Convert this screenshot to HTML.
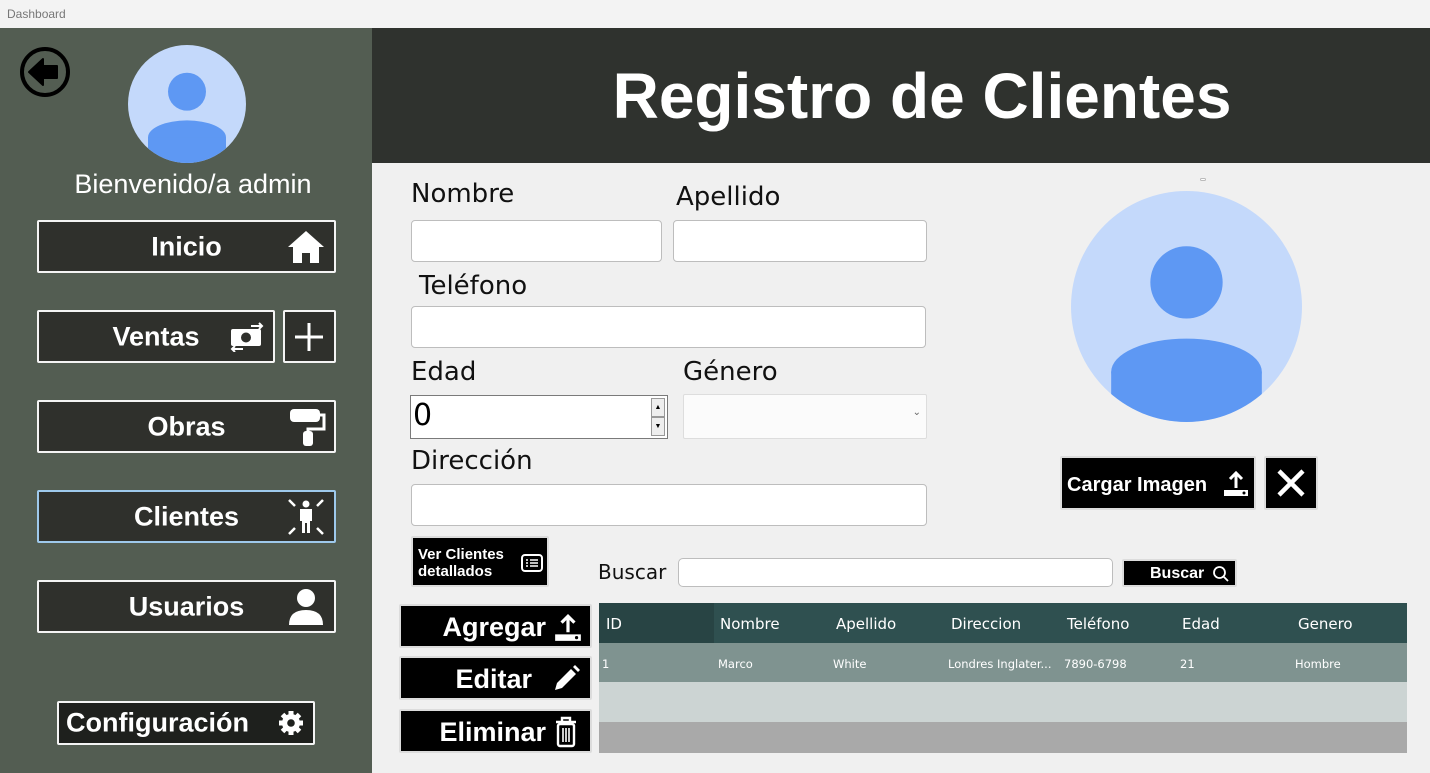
<!DOCTYPE html>
<html><head><meta charset="utf-8"><style>
*{margin:0;padding:0;box-sizing:border-box}
body{width:1430px;height:773px;overflow:hidden;background:#f0f0f0;font-family:"Liberation Sans",sans-serif;position:relative}
.a{position:absolute}
.tb{left:0;top:0;width:1430px;height:28px;background:#f3f3f3;font-size:12px;color:#777;padding:7px 0 0 7px}
.side{left:0;top:28px;width:372px;height:745px;background:#535d52}
.hdr{left:372px;top:28px;width:1058px;height:135px;background:#2f322e;color:#fff;font-weight:bold;font-size:64px;text-align:center;line-height:137px;padding-left:42px}
.nb{background:#2f302c;border:2px solid #f4f4f4;border-radius:2px;color:#fff;font-weight:bold;font-size:27px;text-align:center}
.nb span{position:absolute;left:0;right:0;top:50%;transform:translateY(-50%)}
.nb svg{position:absolute;right:8px;top:50%;transform:translateY(-50%)}
.lbl{font-family:"DejaVu Sans",sans-serif;font-size:26px;color:#111}
.inp{background:#fff;border:1px solid #bdbdbd;border-radius:4px}
.bb{background:#000;border:2px solid #dcdcdc;border-radius:2px;color:#fff;font-weight:bold}
.th{font-family:"DejaVu Sans",sans-serif;font-size:15px;color:#fff;top:615px}
.td{font-family:"DejaVu Sans",sans-serif;font-size:11.5px;color:#fff;top:657px}
</style></head><body>
<div class="a tb">Dashboard</div>
<div class="a side"></div>
<svg class="a" style="left:19px;top:46px" width="52" height="52" viewBox="0 0 52 52"><circle cx="26" cy="26" r="23" fill="none" stroke="#000" stroke-width="4"/><path d="M10 26 L24 13 L24 20 L38 20 L38 32 L24 32 L24 39 Z" fill="#000" stroke="#000" stroke-width="2" stroke-linejoin="round"/></svg>
<svg class="a" style="left:128px;top:45px" width="118" height="118" viewBox="0 0 230 230"><defs><clipPath id="c1"><circle cx="115" cy="115" r="115"/></clipPath></defs><circle cx="115" cy="115" r="115" fill="#c4d9fb"/><circle cx="115" cy="91" r="37" fill="#5e98f3"/><g clip-path="url(#c1)"><ellipse cx="115" cy="180" rx="76" ry="33" fill="#5e98f3"/><rect x="39" y="180" width="152" height="60" fill="#5e98f3"/></g></svg>
<div class="a" style="left:0;width:386px;top:169px;text-align:center;color:#fff;font-size:27px">Bienvenido/a admin</div>

<div class="a nb" style="left:37px;top:220px;width:299px;height:53px"><span>Inicio</span><svg width="40" height="36" viewBox="0 0 40 36"><path d="M20 2 L38 18 L33 18 L33 34 L24 34 L24 24 L16 24 L16 34 L7 34 L7 18 L2 18 Z" fill="#fff"/></svg></div>

<div class="a nb" style="left:37px;top:310px;width:238px;height:53px"><span>Ventas</span><svg width="36" height="30" viewBox="0 0 36 30"><rect x="2" y="7" width="30" height="17" rx="2" fill="#fff"/><circle cx="17" cy="15.5" r="5" fill="#2f302c"/><path d="M22 4 H33 M30 1 L33 4 L30 7 M14 27 H3 M6 24 L3 27 L6 30" stroke="#fff" stroke-width="2" fill="none"/></svg></div>
<div class="a nb" style="left:283px;top:310px;width:53px;height:53px"><svg style="right:8px" width="34" height="34" viewBox="0 0 34 34"><path d="M17 3 V31 M3 17 H31" stroke="#fff" stroke-width="3"/></svg></div>

<div class="a nb" style="left:37px;top:400px;width:299px;height:53px"><span>Obras</span><svg width="38" height="40" viewBox="0 0 38 40"><rect x="2" y="2" width="30" height="13" rx="4" fill="#fff"/><path d="M32 8 H36 V22 H20 V27" stroke="#fff" stroke-width="3" fill="none"/><rect x="15" y="24" width="10" height="15" rx="3" fill="#fff"/></svg></div>

<div class="a nb" style="left:37px;top:490px;width:299px;height:53px;border-color:#9ec9ec"><span>Clientes</span><svg width="40" height="40" viewBox="0 0 40 40"><circle cx="20" cy="7" r="3.5" fill="#fff"/><path d="M14 12 H26 V24 H24 V36 H21 V26 H19 V36 H16 V24 H14 Z" fill="#fff"/><path d="M3 3 L9 9 M37 3 L31 9 M3 37 L9 31 M37 37 L31 31" stroke="#fff" stroke-width="2.5"/></svg></div>

<div class="a nb" style="left:37px;top:580px;width:299px;height:53px"><span>Usuarios</span><svg width="40" height="40" viewBox="0 0 40 40"><circle cx="20" cy="11" r="9" fill="#fff"/><path d="M3 38 Q3 23 20 23 Q37 23 37 38 Z" fill="#fff"/></svg></div>

<div class="a nb" style="left:57px;top:701px;width:258px;height:44px;background:#1e201d;font-size:27px"><span style="left:7px;right:0;text-align:left">Configuración</span><svg style="right:8px" width="28" height="28" viewBox="0 0 28 28"><g fill="#fff"><circle cx="14" cy="14" r="9"/><g stroke="#fff" stroke-width="5"><path d="M14 2 V26 M2 14 H26 M5.5 5.5 L22.5 22.5 M22.5 5.5 L5.5 22.5"/></g></g><circle cx="14" cy="14" r="3.8" fill="#1e201d"/></svg></div>

<div class="a hdr">Registro de Clientes</div>

<div class="a lbl" style="left:411px;top:179px">Nombre</div>
<div class="a lbl" style="left:676px;top:182px">Apellido</div>
<div class="a inp" style="left:411px;top:220px;width:251px;height:42px"></div>
<div class="a inp" style="left:673px;top:220px;width:254px;height:42px"></div>
<div class="a lbl" style="left:419px;top:271px">Teléfono</div>
<div class="a inp" style="left:411px;top:306px;width:515px;height:42px"></div>
<div class="a lbl" style="left:411px;top:357px">Edad</div>
<div class="a lbl" style="left:683px;top:357px">Género</div>
<div class="a" style="left:410px;top:395px;width:258px;height:44px;background:#fff;border:1px solid #7a7a7a"><div class="a" style="left:2px;top:2px;font-family:'DejaVu Sans',sans-serif;font-size:30px;color:#000">0</div><div class="a" style="right:2px;top:2px;width:14px;height:19px;background:#eee;border:1px solid #999;font-size:7px;text-align:center;line-height:17px">▲</div><div class="a" style="right:2px;top:21px;width:14px;height:19px;background:#eee;border:1px solid #999;font-size:7px;text-align:center;line-height:17px">▼</div></div>
<div class="a" style="left:683px;top:394px;width:244px;height:45px;background:#fbfbfb;border:1px solid #ddd;border-radius:2px"><div class="a" style="right:5px;top:12px;font-size:10px;color:#666">⌄</div></div>
<div class="a lbl" style="left:411px;top:446px">Dirección</div>
<div class="a inp" style="left:411px;top:484px;width:516px;height:42px"></div>

<div class="a" style="left:1200px;top:178px;width:6px;height:3px;border:1px solid #bbb;border-radius:2px;background:#fff"></div>
<svg class="a" style="left:1071px;top:191px" width="231" height="231" viewBox="0 0 230 230"><defs><clipPath id="c2"><circle cx="115" cy="115" r="115"/></clipPath></defs><circle cx="115" cy="115" r="115" fill="#c4d9fb"/><circle cx="115" cy="91" r="36" fill="#5e98f3"/><g clip-path="url(#c2)"><ellipse cx="115" cy="180" rx="75" ry="33" fill="#5e98f3"/><rect x="40" y="180" width="150" height="60" fill="#5e98f3"/></g></svg>

<div class="a bb" style="left:1060px;top:456px;width:196px;height:54px;font-size:20px"><div class="a" style="left:5px;top:16px">Cargar Imagen</div><svg class="a" style="left:160px;top:12px" width="28" height="28" viewBox="0 0 28 28"><path d="M14 18 V3 M8 9 L14 3 L20 9" stroke="#fff" stroke-width="3" fill="none"/><path d="M2 20 H26 V26 H2 Z" fill="#fff"/><circle cx="22" cy="23" r="1.5" fill="#000"/></svg></div>
<div class="a bb" style="left:1264px;top:456px;width:54px;height:54px"><svg class="a" style="left:9px;top:9px" width="32" height="32" viewBox="0 0 32 32"><path d="M4 4 L28 28 M28 4 L4 28" stroke="#fff" stroke-width="4.5"/></svg></div>

<div class="a bb" style="left:411px;top:536px;width:138px;height:51px;font-size:15px;line-height:17px"><div class="a" style="left:5px;top:8px">Ver Clientes<br>detallados</div><svg class="a" style="left:108px;top:16px" width="22" height="18" viewBox="0 0 22 18"><rect x="1" y="1" width="20" height="16" rx="3" fill="none" stroke="#fff" stroke-width="2"/><path d="M5 6 H7 M9 6 H17 M5 9 H7 M9 9 H17 M5 12 H7 M9 12 H17" stroke="#fff" stroke-width="1.6"/></svg></div>

<div class="a lbl" style="left:598px;top:560px;font-size:20px">Buscar</div>
<div class="a inp" style="left:678px;top:558px;width:435px;height:29px;border-radius:5px"></div>
<div class="a bb" style="left:1122px;top:559px;width:115px;height:28px;font-size:16px"><div class="a" style="left:26px;top:4px">Buscar</div><svg class="a" style="left:88px;top:4px" width="18" height="18" viewBox="0 0 18 18"><circle cx="7.5" cy="7.5" r="5.5" fill="none" stroke="#fff" stroke-width="1.8"/><path d="M11.5 11.5 L16 16" stroke="#fff" stroke-width="1.8"/></svg></div>

<div class="a bb" style="left:399px;top:604px;width:193px;height:44px;font-size:27px"><div class="a" style="right:44px;top:6px">Agregar</div><svg class="a" style="right:7px;top:7px" width="30" height="30" viewBox="0 0 28 28"><path d="M14 18 V3 M8 9 L14 3 L20 9" stroke="#fff" stroke-width="3" fill="none"/><path d="M2 20 H26 V26 H2 Z" fill="#fff"/><circle cx="22" cy="23" r="1.5" fill="#000"/></svg></div>
<div class="a bb" style="left:399px;top:656px;width:193px;height:44px;font-size:27px"><div class="a" style="right:58px;top:6px">Editar</div><svg class="a" style="right:9px;top:6px" width="30" height="30" viewBox="0 0 30 30"><path d="M4 26 L6 19 L20 5 L25 10 L11 24 Z" fill="#fff"/><path d="M22 3 L24 1 L29 6 L27 8 Z" fill="#fff"/></svg></div>
<div class="a bb" style="left:399px;top:709px;width:193px;height:44px;font-size:27px"><div class="a" style="right:44px;top:6px">Eliminar</div><svg class="a" style="right:12px;top:5px" width="24" height="32" viewBox="0 0 24 32"><path d="M2 6 H22 M8 6 V2 H16 V6" stroke="#fff" stroke-width="2.4" fill="none"/><rect x="4" y="8" width="16" height="22" rx="2" fill="none" stroke="#fff" stroke-width="2.4"/><path d="M9 12 V26 M12 12 V26 M15 12 V26" stroke="#fff" stroke-width="1.6"/></svg></div>

<div class="a" style="left:599px;top:603px;width:808px;height:40px;background:#2f5050"></div>
<div class="a" style="left:599px;top:603px;width:115px;height:40px;background:#284444"></div>
<div class="a" style="left:599px;top:643px;width:808px;height:39px;background:#7f9390"></div>
<div class="a" style="left:599px;top:682px;width:808px;height:40px;background:#ccd4d3"></div>
<div class="a" style="left:599px;top:722px;width:808px;height:31px;background:#a9a9a9"></div>
<div class="a th" style="left:606px">ID</div>
<div class="a th" style="left:720px">Nombre</div>
<div class="a th" style="left:836px">Apellido</div>
<div class="a th" style="left:951px">Direccion</div>
<div class="a th" style="left:1067px">Teléfono</div>
<div class="a th" style="left:1182px">Edad</div>
<div class="a th" style="left:1298px">Genero</div>
<div class="a td" style="left:602px">1</div>
<div class="a td" style="left:718px">Marco</div>
<div class="a td" style="left:833px">White</div>
<div class="a td" style="left:948px">Londres Inglater...</div>
<div class="a td" style="left:1064px">7890-6798</div>
<div class="a td" style="left:1180px">21</div>
<div class="a td" style="left:1295px">Hombre</div>
</body></html>
